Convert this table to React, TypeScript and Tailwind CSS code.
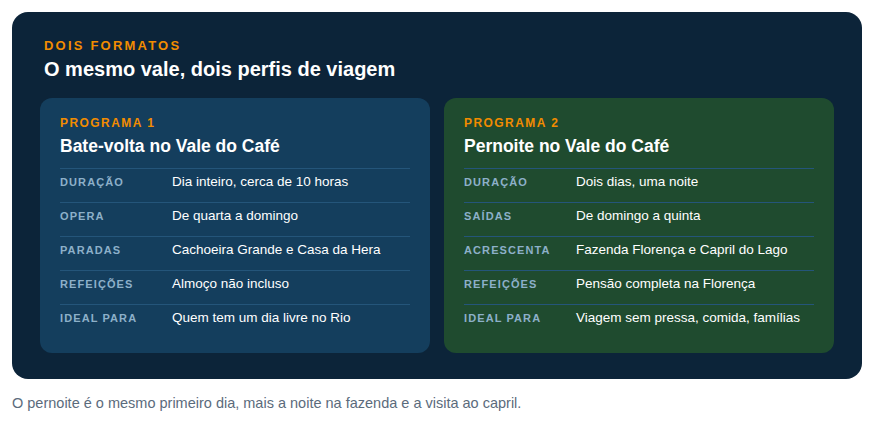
const programs = [
  {
    tag: 'PROGRAMA 1',
    title: 'Bate-volta no Vale do Café',
    bg: 'bg-[#143e5d]',
    rows: [
      ['Duração', 'Dia inteiro, cerca de 10 horas'],
      ['Opera', 'De quarta a domingo'],
      ['Paradas', 'Cachoeira Grande e Casa da Hera'],
      ['Refeições', 'Almoço não incluso'],
      ['Ideal para', 'Quem tem um dia livre no Rio'],
    ],
  },
  {
    tag: 'PROGRAMA 2',
    title: 'Pernoite no Vale do Café',
    bg: 'bg-[#1f4b2f]',
    rows: [
      ['Duração', 'Dois dias, uma noite'],
      ['Saídas', 'De domingo a quinta'],
      ['Acrescenta', 'Fazenda Florença e Capril do Lago'],
      ['Refeições', 'Pensão completa na Florença'],
      ['Ideal para', 'Viagem sem pressa, comida, famílias'],
    ],
  },
];

const App = () => {
  return (
    <div className="pl-3 pt-3 font-['Liberation_Sans',Arial,sans-serif]">
      <section className="w-[850px] bg-[#0c2439] rounded-2xl px-7 pt-[26px] pb-[26px]">
        <div className="px-1">
          <div className="text-[13px] font-bold tracking-[0.17em] text-[#f28c00] leading-4">DOIS FORMATOS</div>
          <h2 className="mt-[3px] text-[20px] font-bold text-white leading-6">O mesmo vale, dois perfis de viagem</h2>
        </div>

        <div className="mt-[17px] grid grid-cols-2 gap-[14px]">
          {programs.map((p) => (
            <div key={p.tag} className={`${p.bg} rounded-xl px-5 pt-[17px] pb-[15px]`}>
              <div className="text-[12px] font-bold tracking-[0.12em] text-[#f28c00] leading-4">{p.tag}</div>
              <h3 className="mt-[4px] text-[17.5px] font-bold text-white leading-[22px]">{p.title}</h3>
              <div className="mt-[11px]">
                {p.rows.map(([label, value]) => (
                  <div key={label} className="flex items-center h-[34px] pb-[6px] border-t border-[#24557a]">
                    <div className="w-[112px] shrink-0 text-[11px] font-bold uppercase tracking-[0.1em] text-[#8db0c9]">
                      {label}
                    </div>
                    <div className="text-[13.5px] text-white">{value}</div>
                  </div>
                ))}
              </div>
            </div>
          ))}
        </div>
      </section>
      <p className="mt-[14px] text-[14.5px] text-[#5b6b7c]">
        O pernoite é o mesmo primeiro dia, mais a noite na fazenda e a visita ao capril.
      </p>
    </div>
  );
};

export default App;
